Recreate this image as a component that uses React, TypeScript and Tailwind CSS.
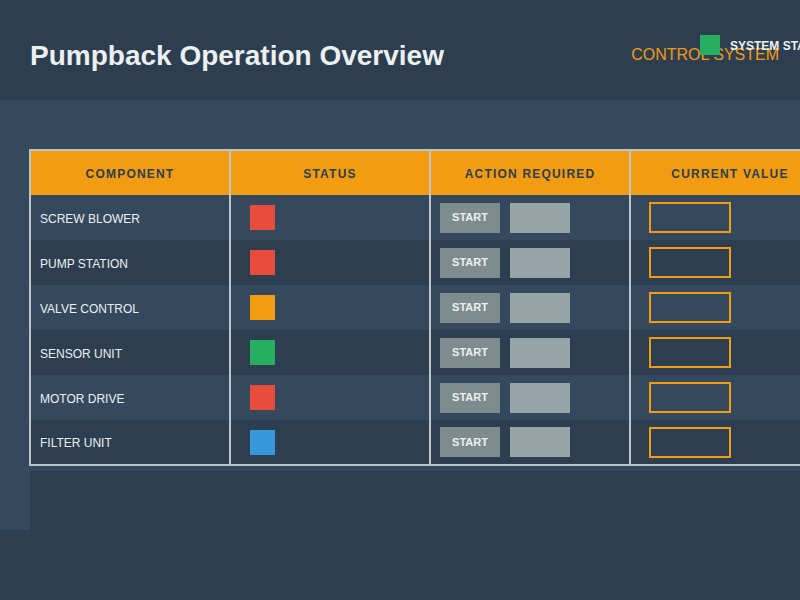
import React from "react";

const rows = [
  { name: "SCREW BLOWER", color: "bg-[#e74c3c]" },
  { name: "PUMP STATION", color: "bg-[#e74c3c]" },
  { name: "VALVE CONTROL", color: "bg-[#f39c12]" },
  { name: "SENSOR UNIT", color: "bg-[#27ae60]" },
  { name: "MOTOR DRIVE", color: "bg-[#e74c3c]" },
  { name: "FILTER UNIT", color: "bg-[#3498db]" },
];

export default function App() {
  return (
    <div
      className="w-[800px] h-[600px] overflow-hidden bg-[#2c3e50] flex flex-col"
      style={{ fontFamily: '"Liberation Sans", Arial, sans-serif' }}
    >
      <header className="relative h-[100px] shrink-0 flex items-start justify-between pl-[30px] pr-[21px]">
        <h1 className="mt-[40px] text-[28px] leading-[32px] font-bold text-[#ecf0f1]">
          Pumpback Operation Overview
        </h1>
        <div className="mt-[46px] text-[16px] leading-[18px] text-[#f39c12]">CONTROL SYSTEM</div>
        <div className="absolute left-[700px] top-[35px] flex items-center gap-[10px] whitespace-nowrap">
          <div className="w-[20px] h-[20px] bg-[#27ae60]" />
          <span className="pt-[2px] text-[12px] font-bold text-[#ecf0f1]">SYSTEM STATUS</span>
        </div>
      </header>
      <section className="h-[430px] shrink-0 bg-[#34495e] pl-[30px] pt-[50px] flex flex-col overflow-hidden">
        <table className="-ml-[1px] -mt-[1px] table-fixed border-collapse border-2 border-[#bdc3c7] w-[800px] shrink-0">
          <thead>
            <tr className="h-[45px] bg-[#f39c12]">
              {["COMPONENT", "STATUS", "ACTION REQUIRED", "CURRENT VALUE"].map((h) => (
                <th
                  key={h}
                  className="w-[200px] border-x-2 border-[#bdc3c7] p-0 pt-[2px] text-center align-middle text-[12px] font-bold tracking-[1.2px] text-[#2c3e50]"
                >
                  {h}
                </th>
              ))}
            </tr>
          </thead>
          <tbody>
            {rows.map((r, i) => (
              <tr key={r.name} className={`h-[45px] ${i % 2 === 0 ? "bg-[#34495e]" : "bg-[#2c3e50]"}`}>
                <td className="border-x-2 border-[#bdc3c7] p-0 pl-[9px] pt-[2px] align-middle text-[12px] text-[#ecf0f1]">
                  {r.name}
                </td>
                <td className="border-x-2 border-[#bdc3c7] p-0 pl-[19px] align-middle">
                  <div className={`w-[25px] h-[25px] ${r.color}`} />
                </td>
                <td className="border-x-2 border-[#bdc3c7] p-0 pl-[9px] align-middle">
                  <div className="flex gap-[10px]">
                    <div className="w-[60px] h-[30px] bg-[#7f8c8d] flex items-center justify-center text-[11px] font-bold text-[#ecf0f1]">
                      START
                    </div>
                    <div className="w-[60px] h-[30px] bg-[#95a5a6]" />
                  </div>
                </td>
                <td className="border-x-2 border-[#bdc3c7] p-0 pl-[18px] align-middle">
                  <div className="w-[82px] h-[31px] border-2 border-[#f39c12]" />
                </td>
              </tr>
            ))}
          </tbody>
        </table>
        <div className="mt-[5px] flex-1 bg-[#2c3e50]" />
      </section>
    </div>
  );
}
